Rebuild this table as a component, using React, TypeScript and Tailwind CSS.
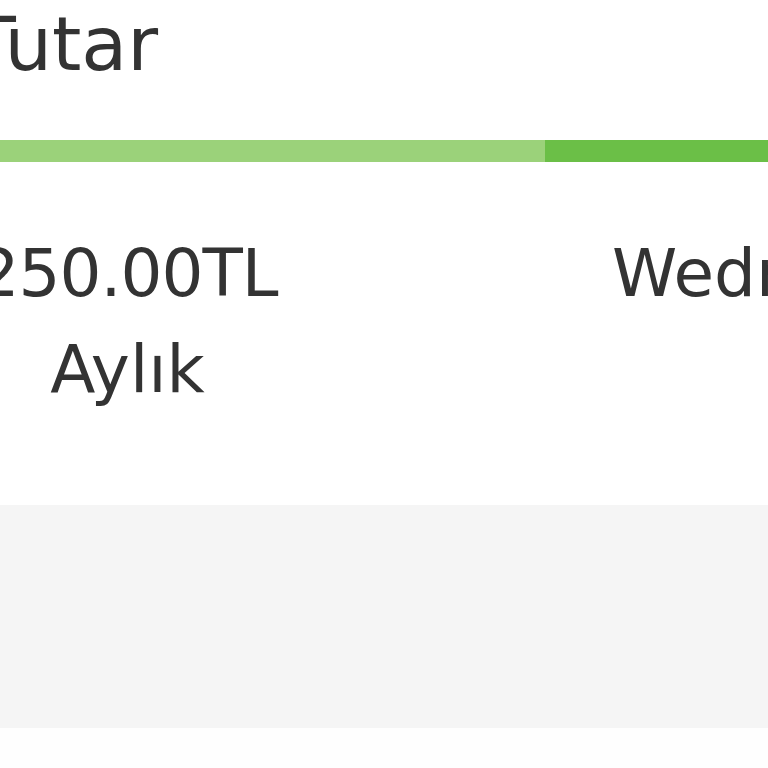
const font = { fontFamily: '"DejaVu Sans", Verdana, sans-serif' };

const App = () => {
  return (
    <div className="h-[768px] w-[768px] overflow-hidden bg-white text-[#333]" style={font}>
      <div className="ml-[-290px] w-[1400px]">
        {/* header */}
        <div className="flex h-[140px]">
          <div className="w-[835px] shrink-0 pl-[260px] pt-[7px] text-[75px] leading-[75px]">Tutar</div>
          <div className="flex-1" />
        </div>
        <div className="flex h-[22px]">
          <div className="w-[835px] shrink-0 bg-[#9bd27a]" />
          <div className="flex-1 bg-[#6bbf47]" />
        </div>

        {/* row 1 */}
        <div className="flex h-[343px] text-[66px] leading-[96px]">
          <div className="w-[835px] shrink-0 pt-[64px] text-center">
            <span className="tracking-[-1px]">250.00TL</span>
            <br />
            Aylık
          </div>
          <div className="min-w-0 flex-1 whitespace-nowrap pl-[67px] pt-[64px]">Wednesday</div>
        </div>

        {/* row 2 */}
        <div className="h-[223px] bg-[#f5f5f5]" />
        <div className="h-[100px] bg-[#fefefe]" />
      </div>
    </div>
  );
};

export default App;
